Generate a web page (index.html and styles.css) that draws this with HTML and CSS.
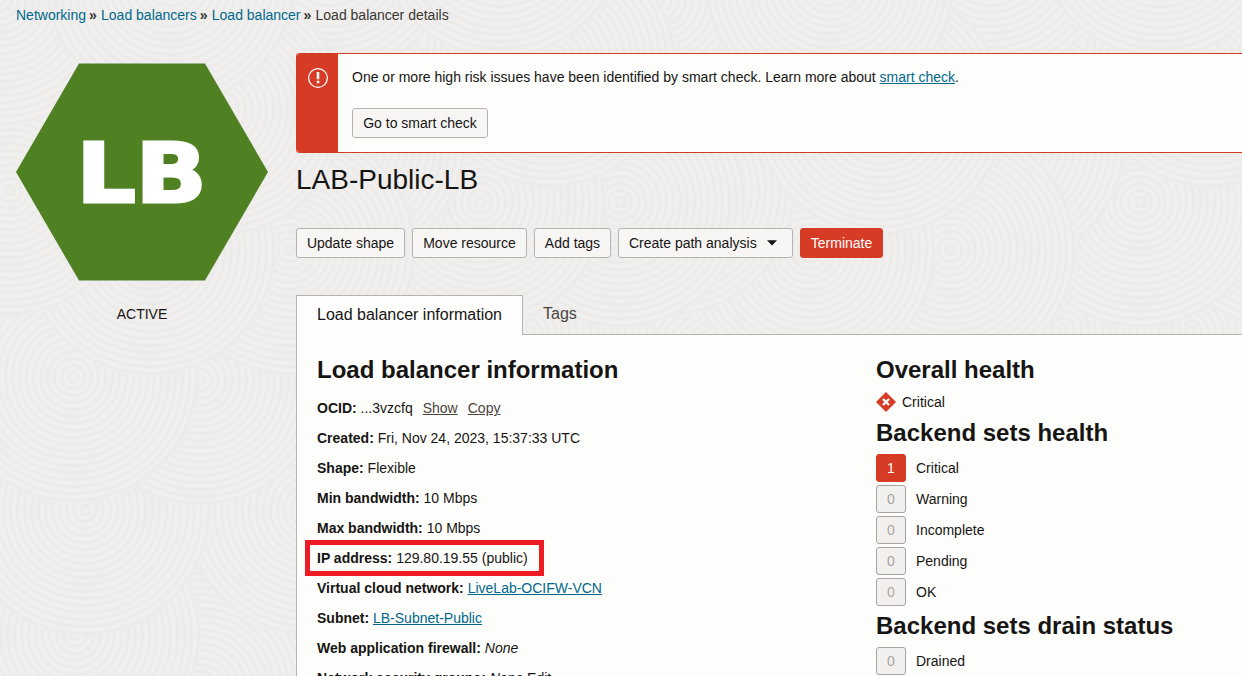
FILE: index.html
```html
<!DOCTYPE html>
<html lang="en">
<head>
<meta charset="utf-8">
<title>Load balancer details</title>
<link rel="stylesheet" href="styles.css">
</head>
<body>
<svg class="backdrop" width="1242" height="676" aria-hidden="true">
  <defs>
    <radialGradient id="rings" gradientUnits="userSpaceOnUse" cx="0" cy="0" r="7" spreadMethod="repeat">
      <stop offset="0" stop-color="#f0efed"/><stop offset=".3" stop-color="#f0efed"/>
      <stop offset=".65" stop-color="#ebeae8"/><stop offset="1" stop-color="#f0efed"/>
    </radialGradient>
    <circle id="disc" r="126" fill="url(#rings)"/>
    <g id="swirls">
      <use href="#disc" x="200" y="690"/><use href="#disc" x="0" y="510"/>
      <use href="#disc" x="75" y="635"/><use href="#disc" x="310" y="510"/>
      <use href="#disc" x="85" y="510"/><use href="#disc" x="200" y="380"/>
      <use href="#disc" x="73" y="377"/><use href="#disc" x="290" y="250"/>
      <use href="#disc" x="150" y="250"/><use href="#disc" x="10" y="190"/>
      <use href="#disc" x="220" y="110"/><use href="#disc" x="0" y="0"/>
      <use href="#disc" x="170" y="-20"/>
    </g>
  </defs>
  <use href="#swirls" x="990" y="-48"/><use href="#swirls" x="660"/>
  <use href="#swirls" x="330" y="-48"/><use href="#swirls"/>
</svg>
<div class="page">
  <nav class="breadcrumbs"><a>Networking</a><i>»</i><a>Load balancers</a><i>»</i><a>Load balancer</a><i>»</i><span>Load balancer details</span></nav>
  <div class="columns">
    <aside class="status">
      <svg class="hexagon" width="252" height="218" viewBox="0 0 252 218">
        <path d="M0 109 63 .5H189L252 109 189 217.500H63Z" fill="#4f8122"/>
        <text class="hex-text" transform="translate(60.500 138.500) scale(1.12 .99)">LB</text>
      </svg>
      <div class="state">ACTIVE</div>
    </aside>
    <main class="content">
      <section class="alert">
        <div class="alert-icon">
          <svg width="22" height="22" viewBox="0 0 22 22"><circle cx="11" cy="11" r="9.400" fill="none" stroke="#fff" stroke-width="1.300"/><path d="M9.700 5H12.300V12.300H9.700ZM9.700 13.800H12.300V16.200H9.700Z" fill="#fff"/></svg>
        </div>
        <div class="alert-body">
          <p>One or more high risk issues have been identified by smart check. Learn more about <a class="link">smart check</a>.</p>
          <button class="btn">Go to smart check</button>
        </div>
      </section>
      <h1>LAB-Public-LB</h1>
      <div class="actions">
        <button class="btn w-update">Update shape</button>
        <button class="btn w-move">Move resource</button>
        <button class="btn w-tags">Add tags</button>
        <button class="btn w-path">Create path analysis <svg class="caret" width="10" height="6" viewBox="0 0 10 6"><path d="M0 .3H10L5 5.500Z" fill="#161513"/></svg></button>
        <button class="btn w-term danger">Terminate</button>
      </div>
      <div class="tabs">
        <div class="tab active">Load balancer information</div>
        <div class="tab">Tags</div>
      </div>
      <div class="panel">
        <section class="info">
          <h2>Load balancer information</h2>
          <div class="row"><b>OCID:</b> <span>...3vzcfq</span><a class="quiet">Show</a><a class="quiet">Copy</a></div>
          <div class="row"><b>Created:</b> <span>Fri, Nov 24, 2023, 15:37:33 UTC</span></div>
          <div class="row"><b>Shape:</b> <span>Flexible</span></div>
          <div class="row"><b>Min bandwidth:</b> <span>10 Mbps</span></div>
          <div class="row"><b>Max bandwidth:</b> <span>10 Mbps</span></div>
          <div class="row marked"><b>IP address:</b> <span>129.80.19.55 (public)</span></div>
          <div class="row"><b>Virtual cloud network:</b> <a class="link">LiveLab-OCIFW-VCN</a></div>
          <div class="row"><b>Subnet:</b> <a class="link">LB-Subnet-Public</a></div>
          <div class="row"><b>Web application firewall:</b> <em>None</em></div>
          <div class="row"><b>Network security groups:</b> <em>None</em> <span>Edit</span></div>
        </section>
        <section class="health">
          <h2>Overall health</h2>
          <div class="overall"><svg width="20" height="20" viewBox="0 0 20 20"><path d="M10 0 20 10 10 20 0 10Z" fill="#d63b25"/><path d="M7 7 13 13M13 7 7 13" stroke="#fff" stroke-width="2.300"/></svg>Critical</div>
          <h2>Backend sets health</h2>
          <div class="counts">
            <div class="count"><span class="badge critical">1</span>Critical</div>
            <div class="count"><span class="badge">0</span>Warning</div>
            <div class="count"><span class="badge">0</span>Incomplete</div>
            <div class="count"><span class="badge">0</span>Pending</div>
            <div class="count"><span class="badge">0</span>OK</div>
          </div>
          <h2>Backend sets drain status</h2>
          <div class="counts">
            <div class="count"><span class="badge">0</span>Drained</div>
          </div>
        </section>
      </div>
    </main>
  </div>
</div>
</body>
</html>
```
FILE: styles.css
```css
* { box-sizing: border-box; }
body { margin: 0; width: 1242px; height: 676px; overflow: hidden; background: #f0efed; color: #161513; font: 14px/20px "Liberation Sans", Arial, sans-serif; }
h1, h2, p { margin: 0; }
.backdrop { position: absolute; left: 0; top: 0; }
.page { position: relative; height: 676px; overflow: hidden; }
.breadcrumbs { display: flex; height: 53px; padding: 5px 0 0 16px; color: #3a3632; }
.breadcrumbs a { color: #00688c; }
.breadcrumbs i { width: 15px; padding-left: 3px; font-style: normal; font-weight: bold; font-size: 14px; }
.columns { display: flex; padding-left: 16px; }
.status { flex: 0 0 280px; padding-top: 10px; }
.hexagon { display: block; }
.hex-text { font: bold 83px "DejaVu Sans", sans-serif; fill: #fff; stroke: #fff; stroke-width: 3px; }
.state { width: 252px; margin-top: 23px; text-align: center; }
.content { flex: 0 0 960px; min-width: 0; }
.alert { display: flex; height: 100px; border: 1px solid #d63b25; border-right: 0; border-radius: 4px 0 0 4px; background: #fdfdfb; overflow: hidden; }
.alert-icon { flex: 0 0 41px; padding: 13px 0 0 10px; background: #d63b25; }
.alert-body { padding: 13px 0 0 14px; }
.alert-body .btn { width: 136px; margin-top: 21px; }
.link { color: #00688c; text-decoration: underline; }
.btn { display: inline-flex; align-items: center; justify-content: center; height: 30px; padding: 0; border: 1px solid #b8b2ad; border-radius: 3px; background: #f8f6f5; color: #161513; font: inherit; white-space: nowrap; }
.btn.danger { border-color: #d63b25; background: #d63b25; color: #fff; }
h1 { height: 75px; padding-top: 9px; font-weight: normal; font-size: 28px; line-height: 36px; }
.actions { display: flex; gap: 7px; height: 67px; }
.w-update { width: 109px; }
.w-move { width: 115px; }
.w-tags { width: 77px; }
.btn.w-path { width: 175px; padding-left: 10px; justify-content: flex-start; }
.w-term { width: 83px; }
.caret { margin-left: 10px; }
.tabs { display: flex; height: 40px; border-bottom: 1px solid #b8b2ad; font-size: 16px; }
.tab { height: 39px; padding: 9px 20px 0; color: #4a4540; }
.tab.active { width: 227px; height: 40px; border: 1px solid #b8b2ad; border-bottom: 0; background: #fdfdfb; color: #161513; }
.panel { display: flex; height: 341px; border-left: 1px solid #b8b2ad; background: #fdfdfb; }
h2 { font-size: 24px; line-height: 30px; white-space: nowrap; }
.info { flex: 0 0 579px; padding: 20px 0 0 20px; }
.info h2 { margin-bottom: 8px; }
.row { height: 30px; line-height: 30px; white-space: nowrap; }
.quiet { margin-left: 10px; color: #4a4540; text-decoration: underline; }
.marked { width: 239px; height: 36px; margin: -3px 0 -3px -12px; padding-left: 7px; border: 5px solid #ed1c24; line-height: 26px; }
.health { padding-top: 20px; }
.overall { display: flex; gap: 6px; align-items: center; height: 33px; }
.counts { display: grid; gap: 3px; padding: 6px 0 5px; }
.count { display: flex; align-items: center; gap: 10px; height: 28px; }
.badge { width: 30px; height: 28px; border: 1px solid #aaa39e; border-radius: 3px; background: #f2f0ef; color: #aaa39e; line-height: 26px; text-align: center; }
.critical { border-color: #d63b25; background: #d63b25; color: #fff; }
```
